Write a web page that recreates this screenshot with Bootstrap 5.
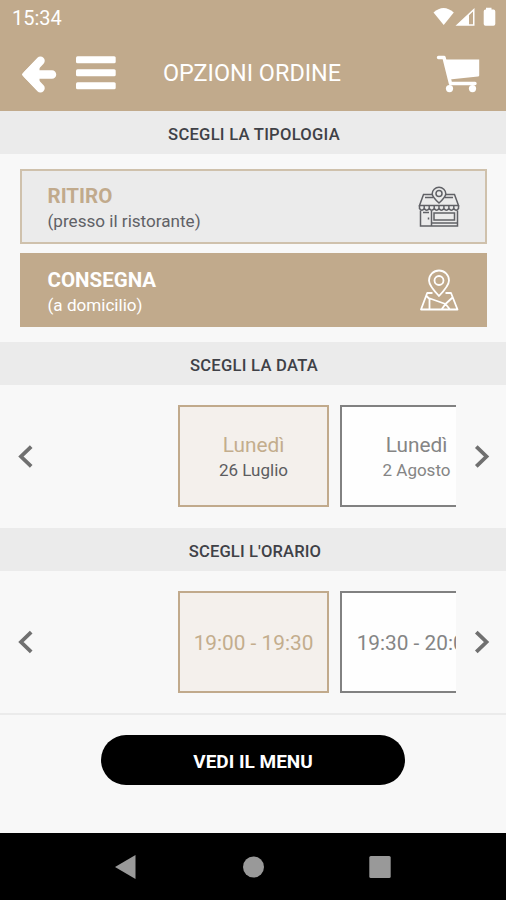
<!DOCTYPE html>
<html lang="it">
<head>
<meta charset="utf-8">
<meta name="viewport" content="width=device-width, initial-scale=1">
<title>Opzioni ordine</title>
<link href="https://cdn.jsdelivr.net/npm/bootstrap@5.3.0/dist/css/bootstrap.min.css" rel="stylesheet">
<style>
  :root { --sand: #c1aa8c; --ink: #3f4147; }
  body { font-family: Roboto, "Liberation Sans", sans-serif; background: #f8f8f8; color: var(--ink); line-height: 1; }
  svg { display: block; flex: none; }
  .screen { height: 900px; }
  .top { background: var(--sand); height: 111px; }
  .status { height: 36px; padding: 0 9px 0 12px; font-size: 20px; }
  .status svg { margin-top: -2px; }
  .appbar { height: 75px; padding: 0 26px 0 21px; }
  .burger { margin-left: 19px; }
  .title { font-size: 23.4px; margin-left: 47px; padding-top: 1px; }
  .heading { height: 43px; padding-top: 4px; background: #ebebeb; font-size: 16.6px; font-weight: 500; letter-spacing: .12px; margin: 0; white-space: nowrap; }
  .heading.wide { letter-spacing: .25px; padding-left: 2px; }
  .options { padding: 15px 19px 15px 20px; gap: 9px; }
  .option { height: 75px; padding: 3px 25px 0 25.5px; border: 2px solid #cfc1ac; background: #ebebeb; border-radius: 0; color: #606166; text-align: left; }
  .option.chosen { height: 74px; background: var(--sand); border-color: var(--sand); color: #fff; }
  .option strong { font-size: 20.5px; font-weight: 700; line-height: 26px; color: var(--sand); }
  .option.chosen strong { color: #fff; }
  .option span span { font-size: 17.1px; line-height: 24px; }
  .option svg { margin-top: -3px; }
  .picker { height: 143px; padding: 0 16px 2px 17px; }
  .strip { width: 407px; height: 102px; padding-left: 129px; gap: 11px; }
  .slot { width: 151px; height: 102px; flex: none; border: 2px solid #818181; background: #fefefe; color: #858585; font-size: 20.8px; white-space: nowrap; border-radius: 0; padding: 3px 0 0 2px; }
  .slot.chosen { border-color: var(--sand); background: #f4f0ec; color: #c3ad8d; padding-left: 0; }
  .slot small { font-size: 17px; line-height: 24px; color: #858585; }
  .slot.chosen small { color: #5c5c5f; }
  .slot b { font-weight: 400; line-height: 26px; }
  .foot { border-top: 2px solid #ebebeb; padding-top: 20px; margin-top: -1px; }
  .go { width: 304px; height: 50px; background: #000; color: #fff; font-size: 19px; font-weight: 700; padding: 4px 0 0; }
  .sysnav { height: 67px; background: #000; padding: 0 115px; }
</style>
</head>
<body>
<main class="screen d-flex flex-column overflow-hidden">
  <header class="top text-white">
    <div class="status d-flex align-items-center justify-content-between">
      <span>15:34</span>
      <svg width="64" height="20" viewBox="0 0 64 20" fill="#fff">
        <path d="M0.500 5.500Q10.500-3.500 20.800 5.500L10.700 18Z"/>
        <path fill-rule="evenodd" d="M22.500 18.800L41.500 1V18.800ZM36 8.300V17.200H40V4.600Z"/>
        <path d="M53 .8H58.500V2.500H60.500Q62.300 2.500 62.300 4.500V17Q62.300 18.800 60.500 18.800H52.500Q50.700 18.800 50.700 17V4.500Q50.700 2.500 52.500 2.500H53Z"/>
      </svg>
    </div>
    <div class="appbar d-flex align-items-center">
      <svg width="36" height="38" viewBox="0 0 36 38" fill="#fff" stroke="#fff" stroke-linecap="round" stroke-linejoin="round"><path stroke-width="3" d="M2.500 19.500L17 5V34Z"/><path fill="none" stroke-width="8.500" d="M19.500 5.800L6.500 19.500L19.500 33.200M9 19.500H31"/></svg>
      <svg class="burger" width="40" height="36" viewBox="0 0 40 36" fill="#fff"><rect x="0" y=".2" width="39.700" height="7" rx="1.500"/><rect x="0" y="13.300" width="39.700" height="7" rx="1.500"/><rect x="0" y="26.200" width="39.700" height="7" rx="1.500"/></svg>
      <span class="title text-nowrap">OPZIONI ORDINE</span>
      <svg class="ms-auto" width="44" height="38" viewBox="0 0 44 38"><path d="M2.500 2.500H8L14.500 28.500H39" fill="none" stroke="#fff" stroke-width="3.400" stroke-linejoin="round" stroke-linecap="round"/><path d="M9 4.500H43.200V20.500Q43 21.500 42 21.600L13.500 24.500Z" fill="#fff"/><circle cx="13.500" cy="33.600" r="3.600" fill="#fff"/><circle cx="36.500" cy="33.600" r="3.600" fill="#fff"/></svg>
    </div>
  </header>

  <h2 class="heading wide d-flex align-items-center justify-content-center">SCEGLI LA TIPOLOGIA</h2>
  <section class="options d-flex flex-column">
    <button class="option d-flex align-items-center justify-content-between" type="button">
      <span class="d-flex flex-column"><strong>RITIRO</strong><span>(presso il ristorante)</span></span>
      <svg width="42" height="42" viewBox="0 0 42 42" fill="none" stroke="#606166" stroke-width="1.500">
        <path d="M14 8.500H5.500L1.500 19.500H40.500L36.500 8.500H28M7 11.500H15M27 11.500H35"/>
        <path d="M21 17Q14.200 11 14.200 7.800A6.800 6.500 0 0 1 27.800 7.800Q27.800 11 21 17Z"/><circle cx="21" cy="7.500" r="3"/>
        <path d="M1.500 19.500V22.500Q3.800 26 6.200 22.500Q8.700 26 11.200 22.500Q13.700 26 16.200 22.500Q18.700 26 21 22.500Q23.400 26 25.900 22.500Q28.400 26 30.900 22.500Q33.400 26 35.800 22.500Q38.200 26 40.500 22.500V19.500M6.200 20V23M11.200 20V23M16.200 20V23M21 20V23M25.900 20V23M30.900 20V23M35.800 20V23"/>
        <path d="M2.500 24.500V40H39.500V24.500M13.500 25V40M5 26.500H11M16 27H36.500V34H16ZM14 37H39M10.500 31.500V33.500"/>
      </svg>
    </button>
    <button class="option chosen d-flex align-items-center justify-content-between" type="button">
      <span class="d-flex flex-column"><strong>CONSEGNA</strong><span>(a domicilio)</span></span>
      <svg width="42" height="44" viewBox="0 0 42 44" fill="none" stroke="#fff" stroke-width="1.800" stroke-linejoin="round">
        <path d="M21 28Q11 17.500 11 12.500A10 10 0 0 1 31 12.500Q31 17.500 21 28Z"/><circle cx="21" cy="12.500" r="4.500"/>
        <path d="M14.500 25H9.200L3 41.500H39.500L33 25H27.500M8.500 28L11.500 31V41.500M10.500 30L27.500 36L34.500 29.500M23.500 41.500L27.500 36L32 41.500"/>
      </svg>
    </button>
  </section>

  <h2 class="heading wide d-flex align-items-center justify-content-center">SCEGLI LA DATA</h2>
  <section class="picker d-flex align-items-center">
    <svg width="16" height="24" viewBox="0 0 16 24" fill="none" stroke="#707070" stroke-width="3.800"><path d="M14.200 2.700L4 12.500L14.200 22.300"/></svg>
    <div class="strip d-flex overflow-hidden ms-3">
      <button class="slot chosen d-flex flex-column align-items-center justify-content-center" type="button"><b>Lunedì</b><small>26 Luglio</small></button>
      <button class="slot d-flex flex-column align-items-center justify-content-center" type="button"><b>Lunedì</b><small>2 Agosto</small></button>
    </div>
    <svg class="ms-auto" width="16" height="24" viewBox="0 0 16 24" fill="none" stroke="#707070" stroke-width="3.800"><path d="M2.300 2.700L12.500 12.500L2.300 22.300"/></svg>
  </section>

  <h2 class="heading d-flex align-items-center justify-content-center ps-1 pt-1">SCEGLI L'ORARIO</h2>
  <section class="picker d-flex align-items-center">
    <svg width="16" height="24" viewBox="0 0 16 24" fill="none" stroke="#707070" stroke-width="3.800"><path d="M14.200 2.200L4 12L14.200 21.800"/></svg>
    <div class="strip d-flex overflow-hidden ms-3">
      <button class="slot chosen" type="button">19:00 - 19:30</button>
      <button class="slot" type="button">19:30 - 20:00</button>
    </div>
    <svg class="ms-auto" width="16" height="24" viewBox="0 0 16 24" fill="none" stroke="#707070" stroke-width="3.800"><path d="M2.300 2.200L12.500 12L2.300 21.800"/></svg>
  </section>

  <div class="foot flex-grow-1 text-center"><button class="go btn rounded-pill" type="button">VEDI IL MENU</button></div>
  <nav class="sysnav d-flex align-items-center justify-content-between">
    <svg width="22" height="24" viewBox="0 0 22 24"><path d="M0 12L20.500 0V24Z" fill="#999"/></svg>
    <svg width="22" height="22" viewBox="0 0 22 22"><circle cx="11.500" cy="11" r="10.500" fill="#999"/></svg>
    <svg width="22" height="22" viewBox="0 0 22 22"><rect x=".3" width="21.400" height="22" rx="1.500" fill="#999"/></svg>
  </nav>
</main>
<script src="https://cdn.jsdelivr.net/npm/bootstrap@5.3.0/dist/js/bootstrap.bundle.min.js"></script>
</body>
</html>
